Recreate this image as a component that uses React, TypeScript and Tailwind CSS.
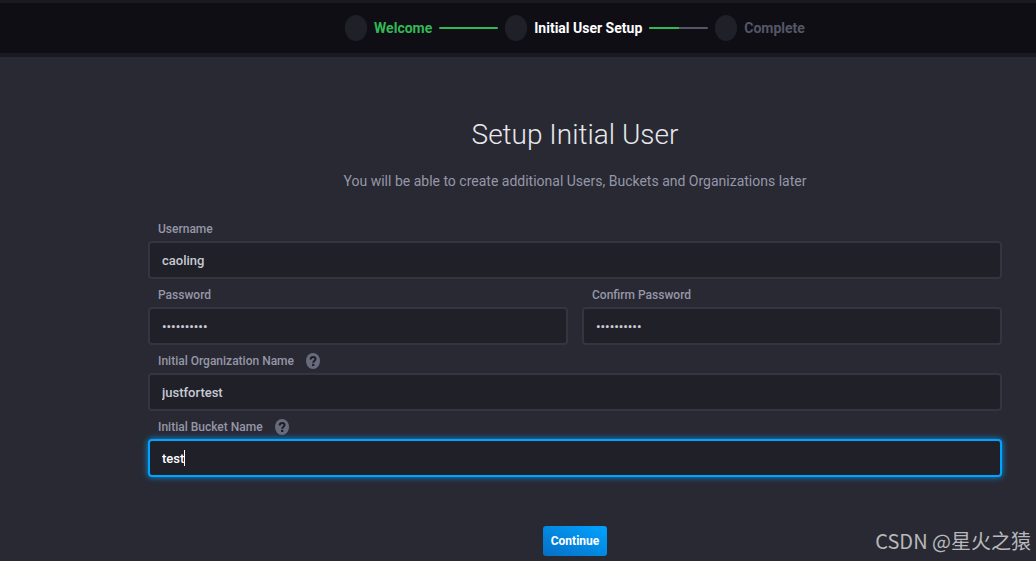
import { useState } from "react";
import clsx from "clsx";

interface StepProps {
    title: string;
    status: "done" | "current" | "todo";
}

function Step({ title, status }: StepProps) {
    return (
        <li className="flex items-center gap-[7px]">
            <span className="h-[26px] w-[22px] rounded-[50%] bg-[#202028]" />
            <span
                className={clsx(
                    "text-sm font-bold whitespace-nowrap",
                    status === "done" && "text-[#32b855]",
                    status === "current" && "text-white",
                    status === "todo" && "text-[#545667]"
                )}
            >
                {title}
            </span>
        </li>
    );
}

function Connector({ half = false }: { half?: boolean }) {
    return (
        <li aria-hidden="true" className="flex h-0.5 w-[59px] overflow-hidden rounded-full bg-[#545667]">
            <span className={clsx("bg-[#32b855]", half ? "w-1/2" : "w-full")} />
        </li>
    );
}

function HelpIcon() {
    return (
        <svg viewBox="0 0 14 16" className="h-4 w-3.5" aria-hidden="true">
            <ellipse cx="7" cy="8" rx="7" ry="8" fill="#686b7c" />
            <path
                d="M4.6 6.4C4.6 4.7 5.6 3.9 7.1 3.9s2.4.8 2.4 2.1c0 1.7-2.3 1.7-2.3 3.8"
                fill="none"
                stroke="#1d1d25"
                strokeWidth="2"
            />
            <rect x="6.1" y="10.8" width="2.2" height="2.2" fill="#1d1d25" />
        </svg>
    );
}

interface FieldProps {
    id: string;
    label: string;
    initial: string;
    type?: string;
    help?: boolean;
    active?: boolean;
}

function Field({ id, label, initial, type = "text", help, active }: FieldProps) {
    const [value, setValue] = useState(initial);

    return (
        <div className="min-w-0 flex-1 pt-1">
            <div className="flex h-6 items-center gap-3 pl-2.5">
                <label htmlFor={id} className="text-xs font-medium text-[#9597a8]">
                    {label}
                </label>
                {help && (
                    <button type="button" aria-label={`About ${label}`}>
                        <HelpIcon />
                    </button>
                )}
            </div>
            <div className="relative">
                <input
                    id={id}
                    type={type}
                    value={value}
                    onChange={(e) => setValue(e.target.value)}
                    className={clsx(
                        "block h-[38px] w-full rounded border-2 bg-[#202028] px-3 text-[13px] font-medium outline-none",
                        active
                            ? "border-[#00a3ff] text-white caret-transparent shadow-[0_0_6px_#0098f0]"
                            : "border-[#353540] text-[#c6cad3]"
                    )}
                />
                {/* Text cursor, kept at the end of the typed value */}
                {active && (
                    <span
                        aria-hidden="true"
                        className="pointer-events-none absolute inset-y-0 left-3.5 flex items-center text-[13px] font-medium"
                    >
                        <span className="invisible">{value}</span>
                        <span className="h-4 w-px bg-white" />
                    </span>
                )}
            </div>
        </div>
    );
}

export default function App() {
    return (
        <div className="relative min-h-screen bg-[#292933] font-[Roboto,'Noto_Sans_CJK_SC',sans-serif]">
            <header className="border-t-[3px] border-b-4 border-[#1a1a22] bg-[#0f0e15]">
                <ol className="flex h-[50px] items-center justify-center gap-[7px] pr-[34px] pl-[148px]">
                    <Step title="Welcome" status="done" />
                    <Connector />
                    <Step title="Initial User Setup" status="current" />
                    <Connector half />
                    <Step title="Complete" status="todo" />
                </ol>
            </header>

            <main className="pt-[58px] pr-[34px] pl-[148px]">
                <h1 className="text-center text-[28px] leading-10 font-light text-[#e7e8eb]">Setup Initial User</h1>
                <p className="mt-4 text-center text-sm leading-5 text-[#9597a8]">
                    You will be able to create additional Users, Buckets and Organizations later
                </p>

                <form className="mt-[22px]" onSubmit={(e) => e.preventDefault()}>
                    <Field id="username" label="Username" initial="caoling" />
                    <div className="flex gap-3.5">
                        <Field id="password" label="Password" initial="0123456789" type="password" />
                        <Field id="confirm" label="Confirm Password" initial="0123456789" type="password" />
                    </div>
                    <Field id="org" label="Initial Organization Name" initial="justfortest" help />
                    <Field id="bucket" label="Initial Bucket Name" initial="test" help active />

                    <div className="mt-[49px] flex justify-center pb-[5px]">
                        <button
                            type="submit"
                            className="h-[30px] rounded-[3px] bg-linear-to-tr from-[#066fc5] to-[#00a3ff] px-2 text-xs font-bold text-white"
                        >
                            Continue
                        </button>
                    </div>
                </form>
            </main>

            <span className="absolute right-[5px] bottom-[5px] font-['Noto_Sans_CJK_SC',sans-serif] text-xl leading-[30px] text-[#b8b8bb]">
                CSDN @星火之猿
            </span>
        </div>
    );
}
